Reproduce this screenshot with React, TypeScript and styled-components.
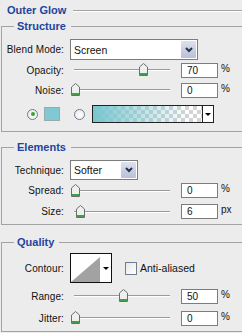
import React from "react";
import styled, { createGlobalStyle } from "styled-components";

const Global = createGlobalStyle`
  html, body {
    margin: 0;
    padding: 0;
    background: #ececec;
  }
  body {
    font-family: "Liberation Sans", Arial, sans-serif;
    font-size: 10px;
    color: #111;
  }
`;

const Panel = styled.div`
  width: 242px;
  height: 333px;
  overflow: hidden;
  background: #ececec;
`;

const TitleRow = styled.div`
  display: flex;
  align-items: center;
  height: 20px;
  padding-left: 7px;
`;

const Title = styled.span`
  font-size: 11px;
  font-weight: 700;
  color: #1c44a0;
  margin-right: 7px;
  white-space: nowrap;
`;

const Rule = styled.div`
  flex: 1;
  height: 1px;
  background: #a3a3a3;
  box-shadow: 0 1px 0 #fff;
`;

const Group = styled.fieldset<{ $gap?: number; $top?: number; $bottom?: number }>`
  box-sizing: border-box;
  width: 270px;
  margin: ${p => p.$gap ?? 0}px 0 0 1px;
  padding: ${p => p.$top ?? 6}px 0 ${p => p.$bottom ?? 2}px 0;
  border: 1px solid #a3a3a3;
  min-inline-size: 0;
`;

const Legend = styled.legend`
  margin-left: 12px;
  padding: 0 5px 0 3px;
  height: 13px;
  line-height: 13px;
  font-size: 11px;
  font-weight: 700;
  color: #1c44a0;
`;

const Row = styled.div<{ $h: number; $mt?: number }>`
  display: flex;
  align-items: center;
  height: ${p => p.$h}px;
  margin-top: ${p => p.$mt ?? 0}px;
`;

const Label = styled.span`
  flex-shrink: 0;
  width: 62px;
  margin-right: 6px;
  text-align: right;
  white-space: nowrap;
  letter-spacing: 0.1px;
`;

const Select = styled.div<{ $w: number; $h: number }>`
  box-sizing: border-box;
  display: flex;
  align-items: center;
  width: ${p => p.$w}px;
  height: ${p => p.$h}px;
  background: #fff;
  border: 1px solid #7c7c7c;
`;

const SelectText = styled.span`
  flex: 1;
  padding-left: 3px;
  font-size: 10.5px;
`;

const SelectButton = styled.div`
  display: flex;
  align-items: center;
  justify-content: center;
  align-self: stretch;
  width: 15px;
  margin: 1px;
  background: linear-gradient(#dde1ee, #b8c0d8);
  border-radius: 1px;
`;

const SliderBox = styled.div`
  position: relative;
  flex-shrink: 0;
  width: 104px;
  height: 14px;

  &::before {
    content: "";
    position: absolute;
    left: 4px;
    right: 4px;
    top: 6px;
    height: 1px;
    background: #9a9a9a;
    box-shadow: 0 1px 0 #fff;
  }
`;

const Thumb = styled.svg`
  position: absolute;
  top: 0;
  width: 9px;
  height: 13px;
`;

const NumBox = styled.div`
  box-sizing: border-box;
  width: 37px;
  height: 15px;
  margin-left: 7px;
  padding-left: 5px;
  line-height: 13px;
  background: #fff;
  border: 1px solid #7c7c7c;
`;

const Unit = styled.span`
  margin-left: 3px;
  margin-top: -4px;
`;

const Radio = styled.div<{ $on?: boolean; $ml: number }>`
  box-sizing: border-box;
  display: flex;
  align-items: center;
  justify-content: center;
  width: 11px;
  height: 11px;
  margin-left: ${p => p.$ml}px;
  border-radius: 50%;
  border: 1px solid #6f7d8f;
  background: radial-gradient(circle at 60% 60%, #fff, #e4e4e4);

  &::after {
    content: "";
    display: ${p => (p.$on ? "block" : "none")};
    width: 4px;
    height: 4px;
    border-radius: 50%;
    background: #3aa23a;
  }
`;

const Swatch = styled.div<{ $c: string }>`
  box-sizing: border-box;
  width: 16px;
  height: 14px;
  margin-left: 6px;
  background: ${p => p.$c};
  border: 1px solid #9aa;
`;

const GradientBox = styled.div`
  box-sizing: border-box;
  display: flex;
  width: 122px;
  height: 18px;
  margin-left: 7px;
  border: 1px solid #222;
`;

const GradientFill = styled.div`
  flex: 1;
  background:
    linear-gradient(90deg, #78c6cf 0%, rgba(120, 198, 207, 0.55) 40%, rgba(120, 198, 207, 0) 88%),
    repeating-conic-gradient(#d4d4d4 0% 25%, #fff 0% 50%) 0 0 / 8px 8px;
`;

const ArrowCell = styled.div`
  display: flex;
  align-items: center;
  justify-content: center;
  width: 10px;
  background: #fff;
  border-left: 1px solid #222;
`;

const Caret = styled.div`
  width: 0;
  height: 0;
  border-left: 3px solid transparent;
  border-right: 3px solid transparent;
  border-top: 3px solid #000;
`;

const Contour = styled.div`
  box-sizing: border-box;
  display: flex;
  width: 42px;
  height: 30px;
  background: #fff;
  border: 1px solid #111;
`;

const ContourGraph = styled.svg`
  width: 29px;
  height: 28px;
  display: block;
`;

const ContourArrow = styled.div`
  flex: 1;
  display: flex;
  align-items: center;
  justify-content: center;
`;

const Check = styled.div`
  box-sizing: border-box;
  width: 12px;
  height: 13px;
  margin-left: 13px;
  border: 1px solid #6f7d8f;
  background: linear-gradient(135deg, #e6e6e6, #fff);
`;

const CheckLabel = styled.span`
  margin-left: 3px;
  font-size: 10.5px;
`;

const Chevron = () => (
  <svg width="8" height="6" viewBox="0 0 8 6">
    <path d="M1 1 L4 4 L7 1" fill="none" stroke="#27324d" strokeWidth="2" />
  </svg>
);

const Slider = ({ pos }: { pos: number }) => (
  <SliderBox>
    <Thumb viewBox="0 0 9 13" style={{ left: pos }}>
      <path d="M0.5 4 L4.5 0.5 L8.5 4 V12.5 H0.5 Z" fill="#eef0ee" stroke="#687068" />
      <rect x="1" y="10" width="7" height="2" fill="#3f9f45" />
    </Thumb>
  </SliderBox>
);

const SliderRow = ({ label, pos, value, unit, h, mt }: { label: string; pos: number; value: string; unit: string; h: number; mt?: number }) => (
  <Row $h={h} $mt={mt}>
    <Label>{label}</Label>
    <Slider pos={pos} />
    <NumBox>{value}</NumBox>
    <Unit>{unit}</Unit>
  </Row>
);

export default function App() {
  return (
    <Panel>
      <Global />
      <TitleRow>
        <Title>Outer Glow</Title>
        <Rule />
      </TitleRow>

      <Group $top={6} $bottom={8}>
        <Legend>Structure</Legend>
        <Row $h={21}>
          <Label>Blend Mode:</Label>
          <Select $w={128} $h={21}>
            <SelectText>Screen</SelectText>
            <SelectButton><Chevron /></SelectButton>
          </Select>
        </Row>
        <SliderRow label="Opacity:" pos={69} value="70" unit="%" h={20} />
        <SliderRow label="Noise:" pos={1} value="0" unit="%" h={20} />
        <Row $h={18} $mt={5}>
          <Radio $on $ml={25} />
          <Swatch $c="#80c9d2" />
          <Radio $ml={14} />
          <GradientBox>
            <GradientFill />
            <ArrowCell><Caret /></ArrowCell>
          </GradientBox>
        </Row>
      </Group>

      <Group $gap={9} $top={6}>
        <Legend>Elements</Legend>
        <Row $h={20}>
          <Label>Technique:</Label>
          <Select $w={68} $h={20}>
            <SelectText>Softer</SelectText>
            <SelectButton><Chevron /></SelectButton>
          </Select>
        </Row>
        <SliderRow label="Spread:" pos={1} value="0" unit="%" h={21} />
        <SliderRow label="Size:" pos={6} value="6" unit="px" h={21} />
      </Group>

      <Group $gap={11} $top={4}>
        <Legend>Quality</Legend>
        <Row $h={30}>
          <Label>Contour:</Label>
          <Contour>
            <ContourGraph viewBox="0 0 29 28">
              <path d="M0 28 L29 3 V28 Z" fill="#a2a2a2" />
            </ContourGraph>
            <ContourArrow><Caret /></ContourArrow>
          </Contour>
          <Check />
          <CheckLabel>Anti-aliased</CheckLabel>
        </Row>
        <SliderRow label="Range:" pos={49} value="50" unit="%" h={22} mt={2} />
        <SliderRow label="Jitter:" pos={1} value="0" unit="%" h={22} />
      </Group>
    </Panel>
  );
}
